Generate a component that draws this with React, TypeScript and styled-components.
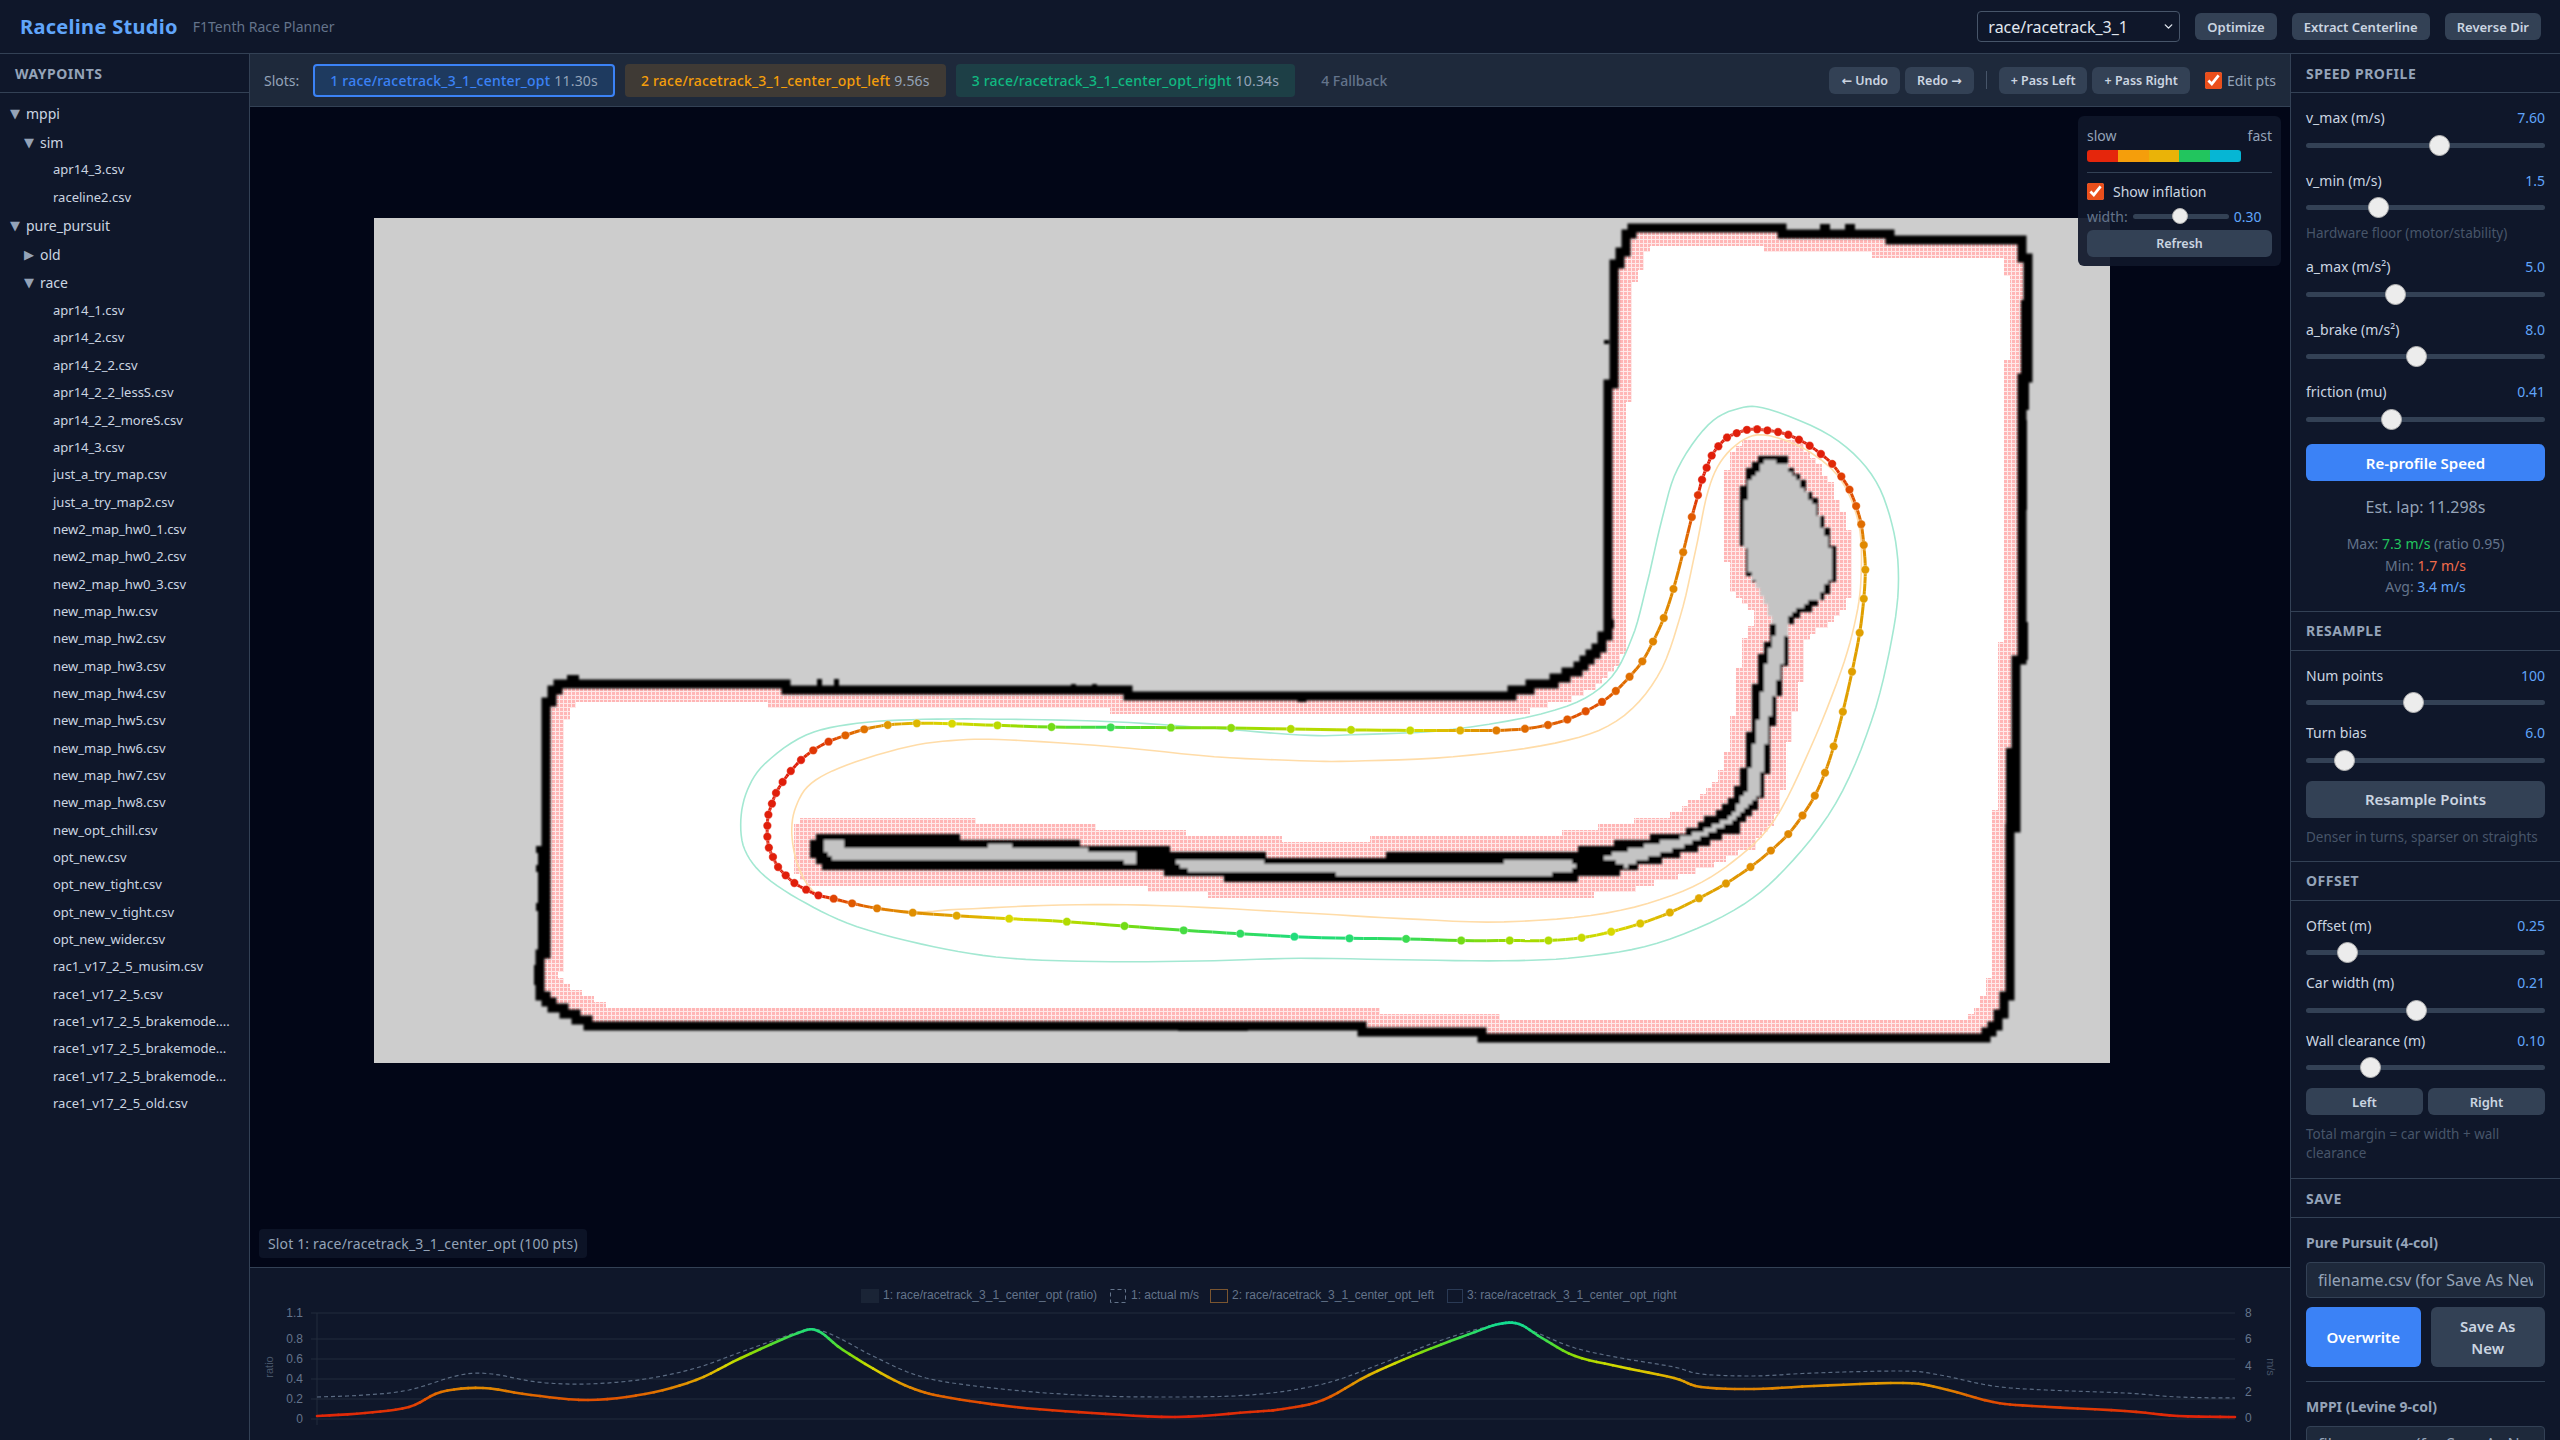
import styled, { createGlobalStyle } from "styled-components";
import { ChevronDown } from "lucide-react";

const sans = `"Noto Sans", "DejaVu Sans", sans-serif`;

const GlobalStyle = createGlobalStyle`
  * {
    box-sizing: border-box;
  }

  html,
  body {
    margin: 0;
    background: #0f172a;
    color: #e2e8f0;
    font-family: ${sans};
  }
`;

const Page = styled.div`
  display: flex;
  flex-direction: column;
  height: 1440px;
  overflow: hidden;
`;

const TopBar = styled.header`
  display: flex;
  align-items: center;
  height: 54px;
  padding: 0 19px 0 20px;
  border-bottom: 1px solid #334155;
`;

const Title = styled.span`
  font-size: 20px;
  font-weight: 700;
  letter-spacing: 0.3px;
  color: #60a5fa;
`;

const Subtitle = styled.span`
  margin-left: 15px;
  font-size: 14px;
  color: #64748b;
`;

const Actions = styled.div`
  display: flex;
  align-items: center;
  gap: 15px;
  margin-left: auto;
`;

const SelectWrap = styled.div`
  position: relative;
  display: flex;
  color: #e2e8f0;

  svg {
    position: absolute;
    top: 9px;
    right: 5px;
    pointer-events: none;
  }
`;

const TrackSelect = styled.select`
  width: 203px;
  height: 31px;
  padding: 0 10px;
  border: 1px solid #475569;
  border-radius: 4px;
  appearance: none;
  background: #0f172a;
  color: #e2e8f0;
  font: 16px ${sans};
`;

const Button = styled.button<{ $primary?: boolean; $h?: number; $full?: boolean; $size?: number }>`
  height: ${(p) => p.$h ?? 27}px;
  width: ${(p) => (p.$full ? "100%" : "auto")};
  padding: 0 12px;
  border: 0;
  border-radius: 6px;
  background: ${(p) => (p.$primary ? "#3b82f6" : "#334155")};
  color: ${(p) => (p.$primary ? "#fff" : "#cbd5e1")};
  font: 600 ${(p) => p.$size ?? 12.5}px ${sans};
  white-space: nowrap;
`;

const Body = styled.div`
  display: flex;
  flex: 1;
  min-height: 0;
`;

const Sidebar = styled.aside`
  flex: 0 0 250px;
  border-right: 1px solid #334155;
  overflow: hidden;
`;

const SectionHead = styled.div`
  display: flex;
  align-items: center;
  height: 39px;
  padding: 0 15px;
  border-bottom: 1px solid #334155;
  font-size: 14px;
  font-weight: 700;
  letter-spacing: 0.5px;
  color: #94a3b8;
`;

const Tree = styled.div`
  padding-top: 6px;
`;

const FolderRow = styled.div<{ $depth: number }>`
  display: flex;
  align-items: center;
  gap: 5px;
  height: 28.7px;
  padding-left: ${(p) => 10 + p.$depth * 14}px;
  font-size: 14px;
  color: #cbd5e1;
`;

const Caret = styled.span`
  width: 11px;
  font-size: 13px;
  line-height: 15px;
  color: #94a3b8;
`;

const FileRow = styled.div`
  height: 27.35px;
  padding-left: 53px;
  font-size: 13px;
  line-height: 27px;
  color: #cbd5e1;
  white-space: nowrap;
`;

const Center = styled.main`
  display: flex;
  flex: 1;
  flex-direction: column;
  min-width: 0;
`;

const SlotBar = styled.div`
  display: flex;
  align-items: center;
  height: 53px;
  padding: 0 14px;
  background: #1e293b;
  border-bottom: 1px solid #334155;
`;

const SlotLabel = styled.span`
  margin-right: 14px;
  font-size: 14px;
  color: #94a3b8;
`;

const Slot = styled.div<{ $bg: string; $fg: string; $active?: boolean }>`
  display: flex;
  align-items: center;
  gap: 4px;
  height: 33px;
  padding: 0 ${(p) => (p.$active ? 15 : 16)}px;
  margin-right: 10px;
  border: ${(p) => (p.$active ? "2px solid #3b82f6" : "0")};
  border-radius: 4px;
  background: ${(p) => p.$bg};
  color: ${(p) => p.$fg};
  font-size: 14px;
  font-weight: 500;
  letter-spacing: 0.2px;
  white-space: nowrap;
`;

const SlotTime = styled.span`
  color: #94a3b8;
  font-weight: 400;
`;

const Fallback = styled.span`
  margin-left: 16px;
  font-size: 14px;
  font-weight: 500;
  color: #64748b;
`;

const SlotTools = styled.div`
  display: flex;
  align-items: center;
  gap: 5px;
  margin-left: auto;
`;

const Divider = styled.span`
  width: 1px;
  height: 18px;
  margin: 0 7px;
  background: #475569;
`;

const Check = styled.input.attrs({ type: "checkbox" })`
  width: 17px;
  height: 17px;
  margin: 0;
  accent-color: #ea4f1c;
`;

const CheckLabel = styled.label<{ $dim?: boolean }>`
  display: flex;
  align-items: center;
  gap: ${(p) => (p.$dim ? 5 : 9)}px;
  height: 17px;
  margin-left: ${(p) => (p.$dim ? 10 : 0)}px;
  font-size: 14px;
  color: ${(p) => (p.$dim ? "#94a3b8" : "#cbd5e1")};
`;

const Canvas = styled.div`
  position: relative;
  flex: 1;
  min-height: 0;
  padding: 111px 0 0 124px;
  background: #020617;
`;

const MapSvg = styled.svg`
  display: block;
`;

const Legend = styled.div`
  position: absolute;
  top: 9px;
  right: 9px;
  width: 203px;
  height: 150px;
  padding: 10px 9px;
  border-radius: 6px;
  background: rgba(15, 23, 42, 0.93);
`;

const LegendEnds = styled.div`
  display: flex;
  justify-content: space-between;
  font-size: 14px;
  line-height: 20px;
  color: #94a3b8;
`;

const Ramp = styled.div`
  display: flex;
  width: 154px;
  height: 12px;
  margin-top: 4px;
  overflow: hidden;
  border-radius: 3px;
`;

const RampStep = styled.span<{ $c: string }>`
  flex: 1;
  background: ${(p) => p.$c};
`;

const LegendRule = styled.div`
  height: 1px;
  margin: 10px 0;
  background: #334155;
`;

const InflationRow = styled.div`
  display: flex;
  align-items: center;
  gap: 5px;
  height: 20px;
  margin: 6px 0 4px;
  font-size: 14px;
  color: #64748b;
`;

const Caption = styled.div`
  position: absolute;
  left: 9px;
  bottom: 9px;
  height: 29px;
  padding: 0 9px;
  border-radius: 4px;
  background: rgba(15, 23, 42, 0.8);
  font-size: 14px;
  letter-spacing: 0.15px;
  line-height: 29px;
  color: #94a3b8;
`;

const ChartPanel = styled.div`
  flex: 0 0 173px;
  border-top: 1px solid #334155;
  background: #0f172a;
`;

const ChartSvg = styled.svg`
  display: block;
`;

const Panel = styled.aside`
  flex: 0 0 270px;
  border-left: 1px solid #334155;
  overflow: hidden;
`;

const PanelBody = styled.div<{ $bottom: number }>`
  padding: 15px 15px ${(p) => p.$bottom}px;
  border-bottom: 1px solid #334155;
`;

const Control = styled.div<{ $gap: number }>`
  margin-bottom: ${(p) => p.$gap}px;
`;

const ControlHead = styled.div`
  display: flex;
  justify-content: space-between;
  height: 20px;
  margin-bottom: 6px;
  font-size: 14px;
  line-height: 20px;
  color: #cbd5e1;
`;

const ControlValue = styled.span`
  color: #60a5fa;
`;

const Slider = styled.input.attrs({ type: "range", min: 0, max: 1, step: 0.001 })<{
  $thumb?: number;
}>`
  display: block;
  width: 100%;
  height: ${(p) => (p.$thumb ?? 21) + 1}px;
  margin: 0;
  appearance: none;
  background: transparent;

  &::-webkit-slider-runnable-track {
    height: 5px;
    border-radius: 3px;
    background: #334155;
  }

  &::-webkit-slider-thumb {
    appearance: none;
    width: ${(p) => p.$thumb ?? 21}px;
    height: ${(p) => p.$thumb ?? 21}px;
    margin-top: ${(p) => (5 - (p.$thumb ?? 21)) / 2}px;
    border: 1px solid #b4b4b4;
    border-radius: 50%;
    background: #ececec;
  }
`;

const InflationSlider = styled(Slider)`
  flex: 0 0 96px;
  width: 96px;
`;

const Hint = styled.div<{ $top: number; $bottom: number }>`
  margin: ${(p) => p.$top}px 0 ${(p) => p.$bottom}px;
  font-size: 13.5px;
  line-height: 19px;
  color: #475569;
`;

const EstLap = styled.div`
  margin: 16px 0;
  font-size: 16px;
  line-height: 20px;
  text-align: center;
  color: #94a3b8;
`;

const Stat = styled.div`
  font-size: 14px;
  line-height: 21.5px;
  text-align: center;
  color: #64748b;
`;

const StatValue = styled.span<{ $c: string }>`
  color: ${(p) => p.$c};
`;

const TwoCol = styled.div<{ $gap: number }>`
  display: grid;
  grid-template-columns: 1fr 1fr;
  gap: ${(p) => p.$gap}px;
`;

const WrapButton = styled(Button)`
  height: 60px;
  padding: 0 16px;
  font-size: 15px;
  line-height: 22px;
  white-space: normal;
`;

const GroupTitle = styled.div`
  height: 20px;
  margin-bottom: 9px;
  font-size: 14px;
  font-weight: 700;
  line-height: 20px;
  color: #94a3b8;
`;

const FileInput = styled.input`
  display: block;
  width: 100%;
  height: 36px;
  margin-bottom: 9px;
  padding: 0 11px;
  border: 1px solid #334155;
  border-radius: 4px;
  background: #1e293b;
  color: #e2e8f0;
  font: 16px ${sans};

  &::placeholder {
    color: #94a3b8;
  }
`;

const Rule = styled.div`
  height: 1px;
  margin: 14px 0 15px;
  background: #334155;
`;

type Pt = [number, number];
type Tp = [number, number, number];

const files = [
  "apr14_1.csv", "apr14_2.csv", "apr14_2_2.csv", "apr14_2_2_lessS.csv", "apr14_2_2_moreS.csv",
  "apr14_3.csv", "just_a_try_map.csv", "just_a_try_map2.csv", "new2_map_hw0_1.csv",
  "new2_map_hw0_2.csv", "new2_map_hw0_3.csv", "new_map_hw.csv", "new_map_hw2.csv",
  "new_map_hw3.csv", "new_map_hw4.csv", "new_map_hw5.csv", "new_map_hw6.csv", "new_map_hw7.csv",
  "new_map_hw8.csv", "new_opt_chill.csv", "opt_new.csv", "opt_new_tight.csv",
  "opt_new_v_tight.csv", "opt_new_wider.csv", "rac1_v17_2_5_musim.csv", "race1_v17_2_5.csv",
  "race1_v17_2_5_brakemode....", "race1_v17_2_5_brakemode...", "race1_v17_2_5_brakemode...",
  "race1_v17_2_5_old.csv",
];

const wallOuter: Pt[] = [
  [556, 687], [684, 686], [985, 689], [1061, 691], [1230, 696], [1300, 699], [1499, 697],
  [1535, 686], [1575, 672], [1601, 645], [1611, 622], [1609, 529], [1609, 419], [1614, 337],
  [1614, 266], [1626, 244], [1632, 226], [1698, 226], [1810, 233], [1912, 238], [2024, 241],
  [2027, 299], [2024, 414], [2019, 513], [2019, 661], [2014, 748], [2012, 913], [2007, 995],
  [1999, 1023], [1984, 1036], [1683, 1039], [1606, 1037], [1427, 1034], [1351, 1028],
  [1300, 1026], [1178, 1025], [1076, 1023], [985, 1023], [704, 1025], [592, 1023], [566, 1013],
  [551, 1003], [538, 987], [538, 963], [546, 950], [543, 907], [543, 847], [546, 787], [548, 700],
];

const island: Pt[] = [
  [816, 835], [954, 835], [974, 842], [1079, 840], [1082, 847], [1168, 847], [1171, 852],
  [1300, 856], [1550, 853], [1606, 844], [1683, 831], [1723, 809], [1741, 781], [1749, 727],
  [1759, 655], [1774, 622], [1780, 609], [1749, 573], [1739, 529], [1744, 474], [1764, 453],
  [1785, 458], [1815, 502], [1833, 546], [1833, 584], [1820, 603], [1792, 620], [1785, 666],
  [1774, 721], [1764, 798], [1739, 831], [1688, 853], [1626, 872], [1555, 883], [1392, 883],
  [1300, 883], [1260, 882], [1199, 877], [1153, 872], [1138, 868], [821, 868], [811, 857],
  [812, 837],
];

const islandHoles: Pt[][] = [
  [
    [824, 840], [842, 842], [847, 848], [960, 848], [1000, 845], [1040, 848], [1135, 852],
    [1137, 863], [1100, 860], [1000, 858], [975, 861], [850, 858], [832, 859], [826, 850],
  ],
  [
    [1174, 860], [1240, 860], [1300, 865], [1570, 861], [1576, 869], [1550, 875], [1392, 877],
    [1300, 872], [1260, 872], [1199, 872], [1181, 868],
  ],
  [
    [1601, 861], [1611, 853], [1688, 836], [1729, 817], [1746, 790], [1757, 727], [1767, 655],
    [1777, 628], [1762, 595], [1749, 567], [1743, 529], [1748, 480], [1767, 459], [1785, 464],
    [1813, 504], [1830, 548], [1830, 581], [1818, 598], [1790, 614], [1782, 663], [1769, 721],
    [1759, 795], [1736, 820], [1683, 847], [1626, 866], [1614, 861],
  ],
];

// little bits of scan noise sticking out of the walls: x, y, w, h
const wallNoise: number[][] = [
  [567, 675, 12, 10], [696, 680, 5, 6], [706, 680, 5, 6], [716, 680, 5, 6], [726, 680, 5, 6],
  [736, 680, 5, 6], [745, 680, 7, 6], [763, 680, 18, 8], [817, 679, 5, 7], [834, 679, 5, 7],
  [1071, 684, 5, 6], [1092, 684, 5, 6], [1230, 692, 70, 8], [1361, 692, 30, 6], [1400, 692, 33, 6],
  [1820, 224, 10, 9], [1845, 224, 10, 9], [2021, 622, 7, 38], [2021, 300, 8, 110], [2020, 420, 7, 90],
  [536, 846, 8, 7], [536, 865, 8, 7], [536, 903, 8, 8], [538, 850, 6, 110], [534, 965, 8, 20],
  [594, 1024, 5, 6], [608, 1024, 5, 6], [622, 1024, 5, 6], [640, 1024, 5, 6],
  [660, 1024, 5, 6], [680, 1024, 5, 6], [700, 1024, 5, 6], [745, 1024, 5, 6], [758, 1023, 53, 6],
  [1178, 1024, 70, 7], [1604, 455, 5, 4], [1604, 340, 5, 4], [1604, 520, 5, 4], [1604, 560, 5, 4],
  [2006, 748, 8, 160],
];

const fromLeft = (x: number, y: number): Pt => [500 + x / 1.96, 640 + y / 3];
const fromRight = (x: number, y: number): Pt => [1300 + x / 1.96, 200 + y / 1.823];

const lineLeft: Tp[] = [
  [1550, 267, 0.62], [1433, 264, 0.68], [1315, 263, 0.72], [1197, 262, 0.85], [1081, 261, 0.72],
  [975, 256, 0.6], [886, 251, 0.55], [817, 250, 0.47], [760, 255, 0.38], [714, 268, 0.28],
  [677, 286, 0.24], [644, 305, 0.12], [614, 331, 0.1], [590, 360, 0], [570, 393, 0], [554, 426, 0],
  [541, 459, 0], [533, 491, 0], [526, 524, 0], [524, 557, 0], [524, 590, 0], [527, 623, 0],
  [535, 651, 0], [545, 681, 0], [560, 706, 0], [577, 729, 0], [600, 749, 0], [624, 766, 0],
  [654, 776, 0.15], [690, 790, 0.22], [739, 805, 0.3], [809, 818, 0.35], [895, 827, 0.42],
  [998, 836, 0.55], [1111, 845, 0.62], [1224, 858, 0.72], [1340, 871, 0.82], [1451, 881, 0.88],
  [1557, 890, 0.95],
];

const lineRight: Tp[] = [
  [97, 1346, 0.92], [208, 1347, 0.85], [316, 1350, 0.72], [411, 1350, 0.65], [487, 1350, 0.62],
  [552, 1345, 0.58], [610, 1334, 0.55], [667, 1319, 0.5], [725, 1299, 0.45], [782, 1273, 0.42],
  [835, 1246, 0.38], [883, 1216, 0.35], [923, 1186, 0.33], [957, 1156, 0.33], [985, 1122, 0.32],
  [1009, 1086, 0.33], [1029, 1044, 0.35], [1046, 996, 0.38], [1064, 933, 0.4], [1082, 860, 0.4],
  [1097, 789, 0.4], [1105, 727, 0.4], [1108, 674, 0.38], [1105, 629, 0.33], [1100, 591, 0.27],
  [1090, 558, 0.22], [1077, 528, 0.18], [1061, 504, 0.12], [1043, 481, 0.05], [1021, 463, 0],
  [999, 448, 0], [978, 437, 0], [957, 428, 0], [937, 423, 0], [916, 420, 0], [896, 418, 0],
  [876, 419, 0], [856, 425, 0], [837, 433, 0], [820, 449, 0], [807, 466, 0], [797, 488, 0],
  [788, 510, 0], [780, 538, 0.08], [768, 578, 0.22], [751, 642, 0.3], [732, 709, 0.33],
  [713, 762, 0.33], [692, 805, 0.32], [671, 841, 0.3], [646, 869, 0.27], [619, 895, 0.24],
  [592, 915, 0.2], [560, 932, 0.2], [524, 947, 0.22], [486, 957, 0.24], [441, 964, 0.26],
  [385, 967, 0.3], [314, 967, 0.45], [216, 967, 0.58], [100, 966, 0.6],
];

const raceDots: Tp[] = [
  ...lineLeft.map(([x, y, t]): Tp => [...fromLeft(x, y), t]),
  ...lineRight.map(([x, y, t]): Tp => [...fromRight(x, y), t]),
];

const tealLine: Pt[] = [
  ...[
    [1568, 285], [1400, 265], [1200, 245], [1000, 238], [830, 238], [700, 250], [600, 285],
    [520, 370], [485, 450], [472, 540], [480, 630], [520, 710], [600, 790], [700, 860], [850, 920],
    [1000, 955], [1200, 965], [1400, 962], [1568, 955],
  ].map(([x, y]) => fromLeft(x, y)),
  ...[
    [200, 1385], [400, 1387], [550, 1380], [700, 1355], [850, 1295], [950, 1220], [1050, 1100],
    [1120, 950], [1160, 800], [1173, 690], [1160, 590], [1120, 500], [1040, 430], [920, 382],
    [860, 380], [800, 410], [740, 490], [710, 580], [680, 700], [650, 800], [600, 880], [500, 930],
    [300, 965], [100, 975],
  ].map(([x, y]) => fromRight(x, y)),
];

const orangeLine: Pt[] = [
  ...[
    [1568, 362], [1400, 350], [1200, 320], [1000, 300], [900, 300], [800, 320], [680, 375],
    [610, 430], [580, 500], [572, 580], [585, 680], [620, 760], [700, 795], [810, 815], [900, 808],
    [1100, 795], [1300, 797], [1568, 818],
  ].map(([x, y]) => fromLeft(x, y)),
  ...[
    [200, 1310], [400, 1316], [600, 1300], [750, 1260], [850, 1205], [930, 1130], [1000, 1000],
    [1060, 860], [1090, 760], [1100, 680], [1095, 590], [1060, 510], [1000, 460], [930, 432],
    [880, 432], [830, 470], [800, 530], [775, 640], [745, 760], [700, 870], [620, 950], [500, 990],
    [300, 1015], [100, 1023],
  ].map(([x, y]) => fromRight(x, y)),
];

const ratioCurve: Pt[] = [
  [317, 1416], [365, 1413], [409, 1407], [441, 1392], [483, 1388], [531, 1395], [588, 1400],
  [645, 1394], [696, 1380], [741, 1358], [798, 1333], [818, 1331], [843, 1350], [888, 1377],
  [920, 1391], [951, 1398], [1015, 1407], [1092, 1413], [1175, 1417], [1250, 1412], [1283, 1409],
  [1323, 1400], [1369, 1375], [1422, 1352], [1475, 1332], [1499, 1324], [1519, 1324], [1542, 1338],
  [1575, 1356], [1621, 1367], [1674, 1378], [1701, 1387], [1754, 1389], [1814, 1386], [1903, 1383],
  [1940, 1388], [1993, 1402], [2032, 1406], [2125, 1411], [2178, 1416], [2235, 1417],
];

const actualCurve: Pt[] = [
  [317, 1397], [365, 1395], [409, 1390], [460, 1375], [492, 1374], [537, 1382], [588, 1384],
  [645, 1379], [696, 1368], [741, 1352], [798, 1332], [814, 1329], [837, 1337], [875, 1357],
  [926, 1378], [1002, 1389], [1079, 1395], [1156, 1397], [1250, 1395], [1323, 1384], [1383, 1363],
  [1436, 1342], [1482, 1328], [1512, 1323], [1535, 1332], [1575, 1348], [1621, 1358], [1674, 1367],
  [1701, 1374], [1754, 1376], [1814, 1373], [1903, 1371], [1940, 1375], [1993, 1386], [2046, 1390],
  [2125, 1393], [2178, 1397], [2235, 1398],
];

const rampStops: [number, number[]][] = [
  [0, [224, 30, 10]],
  [0.2, [224, 80, 0]],
  [0.33, [224, 136, 0]],
  [0.45, [224, 176, 0]],
  [0.55, [216, 216, 0]],
  [0.65, [160, 220, 0]],
  [0.75, [96, 220, 32]],
  [0.88, [48, 220, 96]],
  [1, [20, 220, 144]],
];

function rampColor(t: number) {
  const v = Math.min(1, Math.max(0, t));
  const i = Math.max(0, rampStops.findIndex(([s]) => s >= v) - 1);
  const [a, ca] = rampStops[i];
  const [b, cb] = rampStops[i + 1];
  const k = (v - a) / (b - a);
  const c = ca.map((n, j) => Math.round(n + (cb[j] - n) * k));
  return `rgb(${c[0]},${c[1]},${c[2]})`;
}

// catmull-rom through the traced points, any extra columns get lerped too
function smooth(pts: number[][], closed: boolean, steps = 6) {
  const out: number[][] = [];
  const n = pts.length;
  const at = (i: number) => (closed ? pts[(i + n) % n] : pts[Math.min(n - 1, Math.max(0, i))]);
  const last = closed ? n : n - 1;
  for (let i = 0; i < last; i++) {
    const [p0, p1, p2, p3] = [at(i - 1), at(i), at(i + 1), at(i + 2)];
    for (let s = 0; s < steps; s++) {
      const u = s / steps;
      const x = (j: number) =>
        0.5 *
        (2 * p1[j] +
          (p2[j] - p0[j]) * u +
          (2 * p0[j] - 5 * p1[j] + 4 * p2[j] - p3[j]) * u * u +
          (3 * p1[j] - p0[j] - 3 * p2[j] + p3[j]) * u * u * u);
      const row = [x(0), x(1)];
      if (p1.length > 2) row.push(p1[2] + (p2[2] - p1[2]) * u);
      out.push(row);
    }
  }
  if (!closed) out.push(pts[n - 1]);
  return out;
}

const toPath = (pts: number[][], close = false) =>
  "M" + pts.map((p) => `${p[0].toFixed(1)} ${p[1].toFixed(1)}`).join("L") + (close ? "Z" : "");

// turn a polygon into map-pixel stairs, same look as the occupancy grid
function stairs(pts: Pt[], cell = 6) {
  let d = "";
  let prev: Pt | null = null;
  pts.forEach((a, i) => {
    const b = pts[(i + 1) % pts.length];
    const n = Math.ceil(Math.hypot(b[0] - a[0], b[1] - a[1]) / (cell / 2));
    for (let s = 0; s < n; s++) {
      const x = Math.round((a[0] + ((b[0] - a[0]) * s) / n) / cell) * cell;
      const y = Math.round((a[1] + ((b[1] - a[1]) * s) / n) / cell) * cell;
      if (!prev) d += `M${x} ${y}`;
      else if (prev[0] !== x || prev[1] !== y) d += `H${x}V${y}`;
      prev = [x, y];
    }
  });
  return d + "Z";
}

function TrackMap() {
  const outerPath = stairs(wallOuter);
  const islandPath = stairs(island);
  const line = smooth(raceDots, true, 4);
  return (
    <MapSvg width={1736} height={845} viewBox="374 218 1736 845">
      <defs>
        <pattern id="inflate" width={4} height={4} patternUnits="userSpaceOnUse">
          <rect width={4} height={4} fill="#ffe9e9" />
          <rect width={3} height={3} fill="#ffb6b6" />
        </pattern>
        <clipPath id="inside">
          <path d={outerPath} />
        </clipPath>
        <filter id="soft">
          <feGaussianBlur stdDeviation={0.8} />
        </filter>
      </defs>
      <rect x={374} y={218} width={1736} height={845} fill="#cdcdcd" />
      <path d={outerPath} fill="#fff" />
      <g clipPath="url(#inside)">
        <path d={outerPath} fill="none" stroke="url(#inflate)" strokeWidth={36} />
        <path d={islandPath} fill="none" stroke="url(#inflate)" strokeWidth={32} />
      </g>
      <g filter="url(#soft)">
        <path d={islandPath} fill="#000" />
        {islandHoles.map((h, i) => (
          <path key={i} d={stairs(h, 4)} fill="#c4c4c4" />
        ))}
        <path d={outerPath} fill="none" stroke="#000" strokeWidth={9} />
        {wallNoise.map(([x, y, w, h], i) => (
          <rect key={i} x={x} y={y} width={w} height={h} fill="#000" />
        ))}
      </g>
      <path
        d={toPath(smooth(tealLine, true), true)}
        fill="none"
        stroke="#a3e8d2"
        strokeWidth={1.6}
      />
      <path
        d={toPath(smooth(orangeLine, true), true)}
        fill="none"
        stroke="#ffdca8"
        strokeWidth={1.6}
      />
      {line.map((p, i) => {
        const q = line[(i + 1) % line.length];
        return (
          <line
            key={i}
            x1={p[0]}
            y1={p[1]}
            x2={q[0]}
            y2={q[1]}
            stroke={rampColor(p[2])}
            strokeWidth={3}
          />
        );
      })}
      {raceDots.map(([x, y, t], i) => (
        <circle
          key={i}
          cx={x}
          cy={y}
          r={4.2}
          fill={rampColor(t)}
          stroke="rgba(255,255,255,0.45)"
          strokeWidth={0.8}
        />
      ))}
    </MapSvg>
  );
}

const gridY = [1313, 1339, 1359, 1379, 1399, 1419];
const leftTicks = ["1.1", "0.8", "0.6", "0.4", "0.2", "0"];
const rightTicks: [string, number][] = [
  ["8", 1313],
  ["6", 1339],
  ["4", 1366],
  ["2", 1392],
  ["0", 1418],
];

const chartFont = { fontFamily: '"Liberation Sans", sans-serif' };

function SpeedChart() {
  const ratio = smooth(ratioCurve, false);
  return (
    <ChartSvg width={2040} height={172} viewBox="250 1268 2040 172" style={chartFont}>
      <rect x={861} y={1289} width={18} height={14} fill="#1a2436" />
      <text x={883} y={1299} fontSize={12} fill="#64748b">
        1: race/racetrack_3_1_center_opt (ratio)
      </text>
      <rect
        x={1110.5}
        y={1289.5}
        width={15}
        height={13}
        fill="none"
        stroke="#64748b"
        strokeDasharray="4 3"
      />
      <text x={1131} y={1299} fontSize={12} fill="#64748b">
        1: actual m/s
      </text>
      <rect x={1210.5} y={1289.5} width={17} height={13} fill="none" stroke="#7a5530" />
      <text x={1232} y={1299} fontSize={12} fill="#64748b">
        2: race/racetrack_3_1_center_opt_left
      </text>
      <rect x={1447.5} y={1289.5} width={15} height={13} fill="none" stroke="#2a3a55" />
      <text x={1467} y={1299} fontSize={12} fill="#64748b">
        3: race/racetrack_3_1_center_opt_right
      </text>

      {gridY.map((y, i) => (
        <g key={y}>
          <line x1={311} y1={y} x2={2235} y2={y} stroke="#232d3d" />
          <text x={303} y={y + 4} fontSize={12} fill="#64748b" textAnchor="end">
            {leftTicks[i]}
          </text>
        </g>
      ))}
      <line x1={317} y1={1313} x2={317} y2={1425} stroke="#232d3d" />
      {rightTicks.map(([label, y]) => (
        <text key={label} x={2245} y={y + 4} fontSize={12} fill="#64748b">
          {label}
        </text>
      ))}
      <text
        fontSize={11}
        fill="#475569"
        textAnchor="middle"
        transform="translate(273 1367) rotate(-90)"
      >
        ratio
      </text>
      <text
        fontSize={11}
        fill="#475569"
        textAnchor="middle"
        transform="translate(2267 1367) rotate(90)"
      >
        m/s
      </text>

      <path
        d={toPath(smooth(actualCurve, false))}
        fill="none"
        stroke="#5b6b82"
        strokeWidth={1.2}
        strokeDasharray="4 3"
      />
      {ratio.slice(0, -1).map((p, i) => {
        const q = ratio[i + 1];
        return (
          <line
            key={i}
            x1={p[0]}
            y1={p[1]}
            x2={q[0]}
            y2={q[1]}
            stroke={rampColor((1419 - p[1]) / 95)}
            strokeWidth={2.6}
            strokeLinecap="round"
          />
        );
      })}
    </ChartSvg>
  );
}

function Field({
  label,
  value,
  pos,
  gap = 9.5,
}: {
  label: string;
  value: string;
  pos: number;
  gap?: number;
}) {
  return (
    <Control $gap={gap}>
      <ControlHead>
        <span>{label}</span>
        <ControlValue>{value}</ControlValue>
      </ControlHead>
      <Slider defaultValue={pos} />
    </Control>
  );
}

function App() {
  return (
    <Page>
      <GlobalStyle />
      <TopBar>
        <Title>Raceline Studio</Title>
        <Subtitle>F1Tenth Race Planner</Subtitle>
        <Actions>
          <SelectWrap>
            <TrackSelect defaultValue="race/racetrack_3_1">
              <option>race/racetrack_3_1</option>
            </TrackSelect>
            <ChevronDown size={13} strokeWidth={2.5} />
          </SelectWrap>
          <Button $size={13}>Optimize</Button>
          <Button $size={13}>Extract Centerline</Button>
          <Button $size={13}>Reverse Dir</Button>
        </Actions>
      </TopBar>
      <Body>
        <Sidebar>
          <SectionHead>WAYPOINTS</SectionHead>
          <Tree>
            <FolderRow $depth={0}>
              <Caret>▼</Caret>mppi
            </FolderRow>
            <FolderRow $depth={1}>
              <Caret>▼</Caret>sim
            </FolderRow>
            <FileRow>apr14_3.csv</FileRow>
            <FileRow>raceline2.csv</FileRow>
            <FolderRow $depth={0}>
              <Caret>▼</Caret>pure_pursuit
            </FolderRow>
            <FolderRow $depth={1}>
              <Caret>▶</Caret>old
            </FolderRow>
            <FolderRow $depth={1}>
              <Caret>▼</Caret>race
            </FolderRow>
            {files.map((f, i) => (
              <FileRow key={i}>{f}</FileRow>
            ))}
          </Tree>
        </Sidebar>
        <Center>
          <SlotBar>
            <SlotLabel>Slots:</SlotLabel>
            <Slot $active $bg="#1e3a5f" $fg="#3b82f6">
              1 race/racetrack_3_1_center_opt <SlotTime>11.30s</SlotTime>
            </Slot>
            <Slot $bg="#3f3a35" $fg="#f59e0b">
              2 race/racetrack_3_1_center_opt_left <SlotTime>9.56s</SlotTime>
            </Slot>
            <Slot $bg="#1d3f46" $fg="#10b981">
              3 race/racetrack_3_1_center_opt_right <SlotTime>10.34s</SlotTime>
            </Slot>
            <Fallback>4 Fallback</Fallback>
            <SlotTools>
              <Button>← Undo</Button>
              <Button>Redo →</Button>
              <Divider />
              <Button>+ Pass Left</Button>
              <Button>+ Pass Right</Button>
              <CheckLabel $dim>
                <Check defaultChecked />
                Edit pts
              </CheckLabel>
            </SlotTools>
          </SlotBar>
          <Canvas>
            <TrackMap />
            <Legend>
              <LegendEnds>
                <span>slow</span>
                <span>fast</span>
              </LegendEnds>
              <Ramp>
                {["#e5260c", "#f59e0b", "#eab308", "#22c55e", "#06b6d4"].map((c) => (
                  <RampStep key={c} $c={c} />
                ))}
              </Ramp>
              <LegendRule />
              <CheckLabel>
                <Check defaultChecked />
                Show inflation
              </CheckLabel>
              <InflationRow>
                width:
                <InflationSlider $thumb={16} defaultValue={0.49} />
                <ControlValue>0.30</ControlValue>
              </InflationRow>
              <Button $full>Refresh</Button>
            </Legend>
            <Caption>Slot 1: race/racetrack_3_1_center_opt (100 pts)</Caption>
          </Canvas>
          <ChartPanel>
            <SpeedChart />
          </ChartPanel>
        </Center>
        <Panel>
          <SectionHead>SPEED PROFILE</SectionHead>
          <PanelBody $bottom={13}>
            <Field label="v_max (m/s)" value="7.60" pos={0.564} gap={14.5} />
            <Field label="v_min (m/s)" value="1.5" pos={0.285} gap={14.5} />
            <Hint $top={-9} $bottom={14}>
              Hardware floor (motor/stability)
            </Hint>
            <Field label="a_max (m/s²)" value="5.0" pos={0.363} gap={14.5} />
            <Field label="a_brake (m/s²)" value="8.0" pos={0.459} gap={14.5} />
            <Field label="friction (mu)" value="0.41" pos={0.345} gap={14} />
            <Button $primary $full $h={37} $size={15}>
              Re-profile Speed
            </Button>
            <EstLap>Est. lap: 11.298s</EstLap>
            <Stat>
              Max: <StatValue $c="#22c55e">7.3 m/s</StatValue> (ratio 0.95)
            </Stat>
            <Stat>
              Min: <StatValue $c="#ef6c4a">1.7 m/s</StatValue>
            </Stat>
            <Stat>
              Avg: <StatValue $c="#60a5fa">3.4 m/s</StatValue>
            </Stat>
          </PanelBody>
          <SectionHead>RESAMPLE</SectionHead>
          <PanelBody $bottom={14}>
            <Field label="Num points" value="100" pos={0.445} />
            <Field label="Turn bias" value="6.0" pos={0.13} />
            <Button $full $h={37} $size={15}>
              Resample Points
            </Button>
            <Hint $top={10} $bottom={0}>
              Denser in turns, sparser on straights
            </Hint>
          </PanelBody>
          <SectionHead>OFFSET</SectionHead>
          <PanelBody $bottom={15}>
            <Field label="Offset (m)" value="0.25" pos={0.144} />
            <Field label="Car width (m)" value="0.21" pos={0.459} />
            <Field label="Wall clearance (m)" value="0.10" pos={0.249} />
            <TwoCol $gap={5}>
              <Button $size={13}>Left</Button>
              <Button $size={13}>Right</Button>
            </TwoCol>
            <Hint $top={10} $bottom={0}>
              Total margin = car width + wall clearance
            </Hint>
          </PanelBody>
          <SectionHead>SAVE</SectionHead>
          <PanelBody $bottom={15}>
            <GroupTitle>Pure Pursuit (4-col)</GroupTitle>
            <FileInput placeholder="filename.csv (for Save As New)" />
            <TwoCol $gap={10}>
              <WrapButton $primary>Overwrite</WrapButton>
              <WrapButton>Save As New</WrapButton>
            </TwoCol>
            <Rule />
            <GroupTitle>MPPI (Levine 9-col)</GroupTitle>
            <FileInput placeholder="filename.csv (for Save As New)" />
          </PanelBody>
        </Panel>
      </Body>
    </Page>
  );
}

export default App;
